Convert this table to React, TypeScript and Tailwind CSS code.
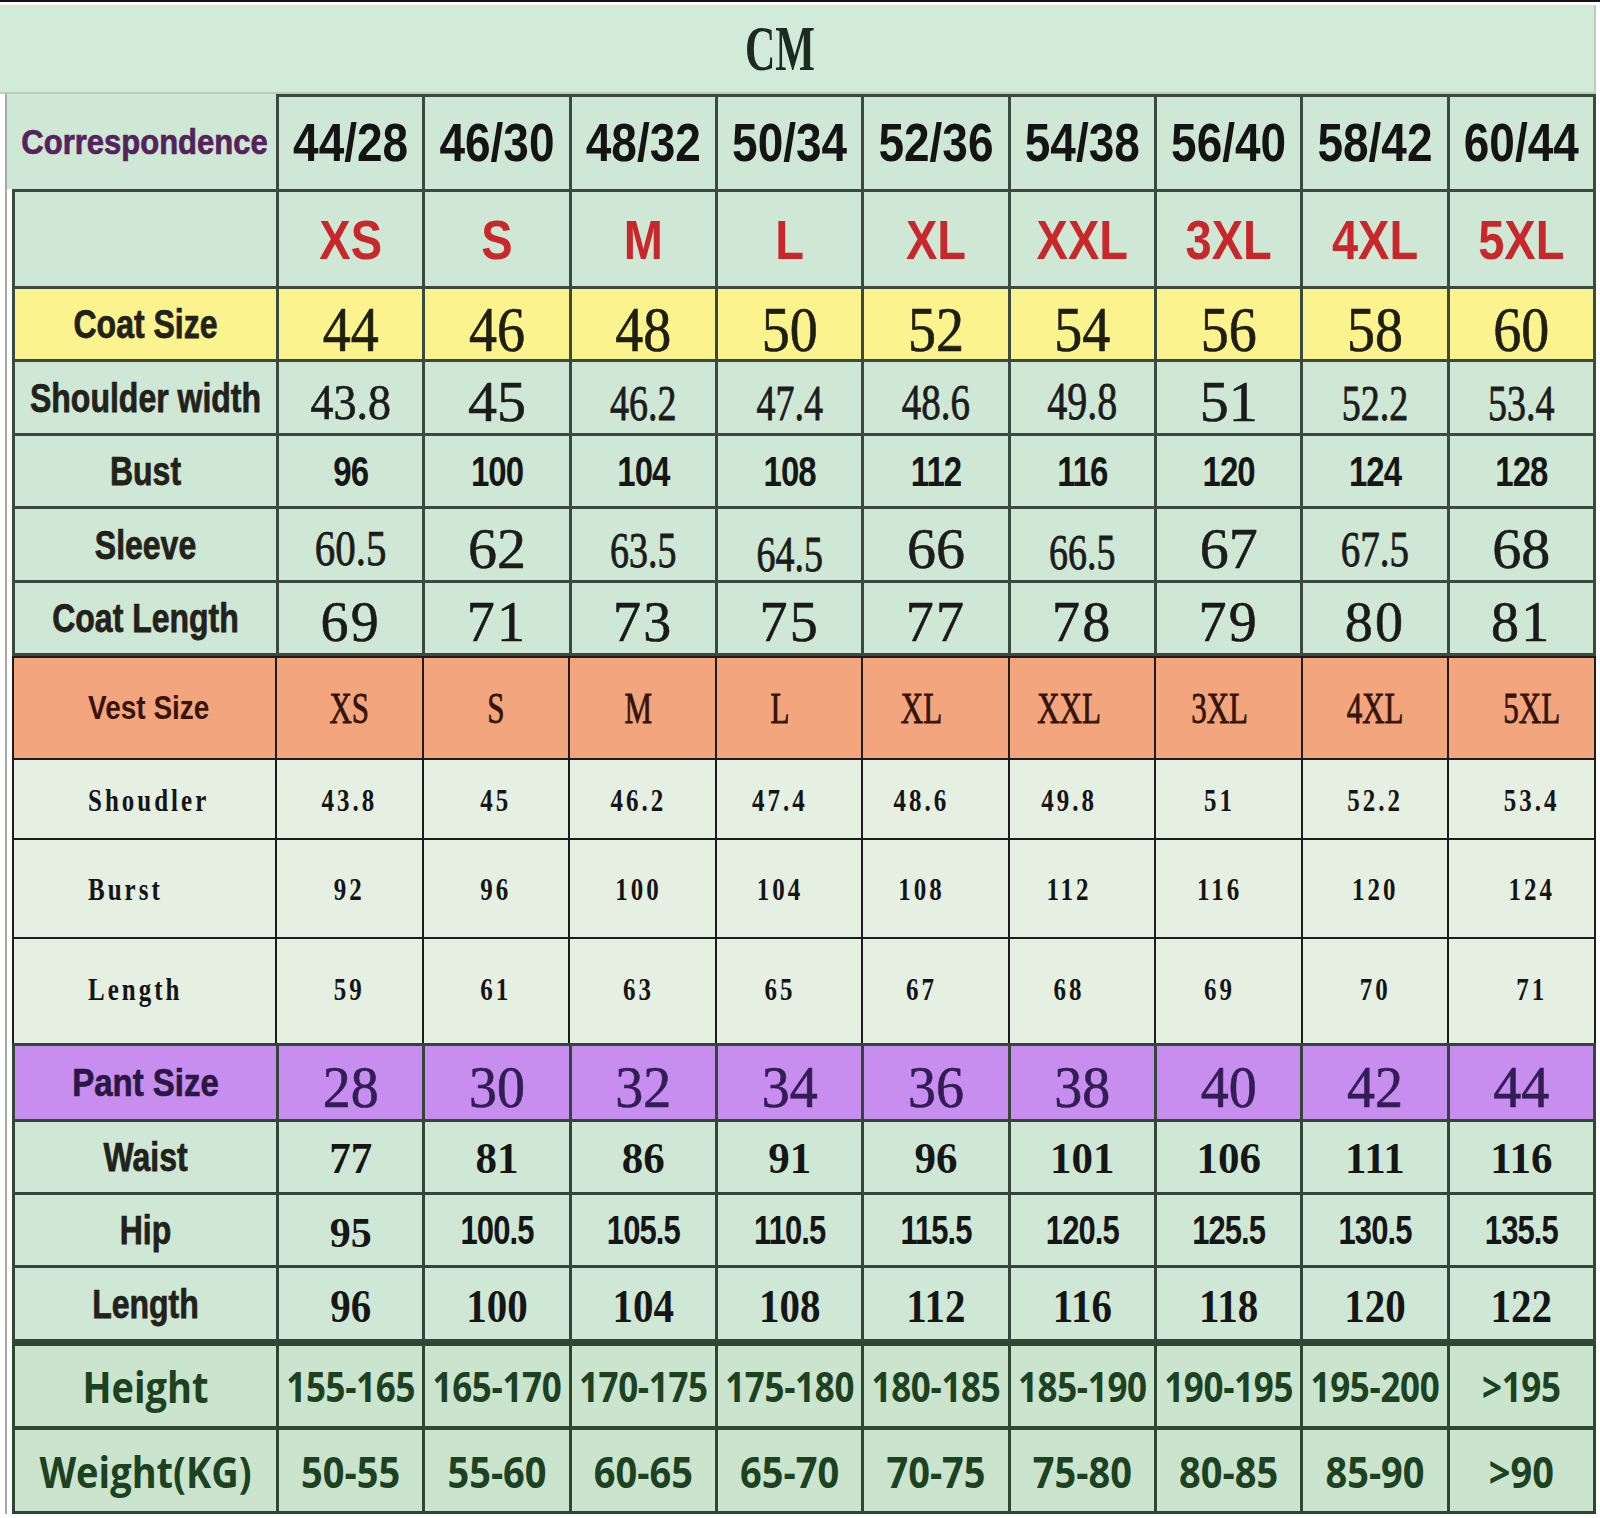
import React from 'react';

const sans = "font-['Liberation_Sans',Arial,sans-serif]";
const serif = "font-['Liberation_Serif','Times_New_Roman',serif]";
const open = "font-['Open_Sans','Liberation_Sans',sans-serif]";
const grid = 'grid grid-cols-[261px_repeat(9,minmax(0,1fr))]';
const stroke = '[-webkit-text-stroke:0.6px_currentColor]';

type Cell = [string, string?];

const Txt = ({ children, className }: { children: React.ReactNode; className: string }) => (
  <span className={`inline-block leading-none whitespace-nowrap ${className}`}>{children}</span>
);

const Row = ({
  label,
  labelCls,
  labelBox = 'justify-center',
  cells,
  cellCls,
  bg,
}: {
  label: string;
  labelCls: string;
  labelBox?: string;
  cells: Cell[];
  cellCls: string;
  bg: string;
}) => (
  <>
    <div className={`flex items-center ${labelBox} ${bg}`}>
      <Txt className={labelCls}>{label}</Txt>
    </div>
    {cells.map(([t, extra], i) => (
      <div key={i} className={`flex items-center justify-center ${bg}`}>
        <Txt className={`${cellCls} ${extra ?? ''}`}>{t}</Txt>
      </div>
    ))}
  </>
);

const plain = (arr: string[], extra = ''): Cell[] => arr.map((t) => [t, extra]);

// vest block text sits a little off the column centres
const vestShift = [
  '',
  '',
  '-translate-x-[4px]',
  '-translate-x-[9px]',
  '-translate-x-[14px]',
  '-translate-x-[13px]',
  '-translate-x-[9px]',
  '',
  'translate-x-[10px]',
];
const vest = (arr: string[]): Cell[] => arr.map((t, i) => [t, vestShift[i]]);

const green = 'bg-[#cfe8d5]';
const coatLabel = `${sans} font-bold text-[32px] scale-y-125 ${stroke} text-[#22221a]`;
const vestText = `${serif} font-bold text-[25px] scale-y-130 text-[#151515]`;

export default function App() {
  return (
    <div className="w-[1600px] h-[1518px] bg-white overflow-hidden">
      <div className="h-[2px] bg-[#151515]" />
      <div className="h-[3px]" />
      <div className="w-[1596px] h-[89px] bg-[#d2ebd9] border-b-2 border-r-2 border-[#b5cfbb] flex items-center justify-center">
        <Txt className={`${serif} font-bold text-[42px] scale-y-150 -translate-x-[17px] text-[#1b2b20]`}>CM</Txt>
      </div>

      <div className="ml-[5px] w-[1591px] border-l-2 border-[#a3aba5] pl-[5px]">
        {/* coat */}
        <div className={`${grid} grid-rows-[92px_94px_70px_71px_70px_71px_70px] gap-[3px] p-[3px] bg-[#3a4a3f]`}>
          <div className={`-mt-[3px] -ml-[8px] flex items-center justify-center ${green}`}>
            <Txt className={`${sans} font-bold text-[31px] scale-y-115 ml-[6px] ${stroke} text-[#55235c]`}>Correspondence</Txt>
          </div>
          {['44/28', '46/30', '48/32', '50/34', '52/36', '54/38', '56/40', '58/42', '60/44'].map((t) => (
            <div key={t} className={`flex items-center justify-center ${green}`}>
              <Txt className={`${sans} font-bold text-[46px] scale-y-115 text-[#141414]`}>{t}</Txt>
            </div>
          ))}

          <Row
            label=""
            labelCls=""
            bg={green}
            cells={plain(['XS', 'S', 'M', 'L', 'XL', 'XXL', '3XL', '4XL', '5XL'])}
            cellCls={`${sans} font-bold text-[47px] scale-y-120 text-[#c8282b]`}
          />
          <Row
            label="Coat Size"
            labelCls={`${coatLabel} text-[#2a2a14]`}
            bg="bg-[#fbf48e]"
            cells={plain(['44', '46', '48', '50', '52', '54', '56', '58', '60'])}
            cellCls={`${serif} text-[56px] scale-y-115 translate-y-[5px] ${stroke} text-[#1e1e12]`}
          />
          <Row
            label="Shoulder width"
            labelCls={coatLabel}
            bg={green}
            cells={[
              ['43.8', 'text-[46px] scale-y-110'],
              ['45', 'text-[58px]'],
              ['46.2', 'text-[38px] scale-y-135'],
              ['47.4', 'text-[38px] scale-y-135'],
              ['48.6', 'text-[39px] scale-y-130 translate-y-[4px]'],
              ['49.8', 'text-[40px] scale-y-130 translate-y-[4px]'],
              ['51', 'text-[58px]'],
              ['52.2', 'text-[38px] scale-y-135 translate-y-[4px]'],
              ['53.4', 'text-[38px] scale-y-135 translate-y-[2px]'],
            ]}
            cellCls={`${serif} translate-y-[4px] ${stroke} text-[#1c1c1c]`}
          />
          <Row
            label="Bust"
            labelCls={coatLabel}
            bg={green}
            cells={plain(['96', '100', '104', '108', '112', '116', '120', '124', '128'])}
            cellCls={`${sans} font-bold text-[33px] scale-y-130 tracking-[-0.03em] text-[#161616]`}
          />
          <Row
            label="Sleeve"
            labelCls={coatLabel}
            bg={green}
            cells={[
              ['60.5', 'text-[41px] scale-y-125'],
              ['62', 'text-[58px]'],
              ['63.5', 'text-[38px] scale-y-135'],
              ['64.5', 'text-[38px] scale-y-135 translate-y-[8px]'],
              ['66', 'text-[58px]'],
              ['66.5', 'text-[38px] scale-y-135 translate-y-[6px]'],
              ['67', 'text-[58px]'],
              ['67.5', 'text-[39px] scale-y-130'],
              ['68', 'text-[58px]'],
            ]}
            cellCls={`${serif} translate-y-[4px] ${stroke} text-[#1c1c1c]`}
          />
          <Row
            label="Coat Length"
            labelCls={coatLabel}
            bg={green}
            cells={plain(['69', '71', '73', '75', '77', '78', '79', '80', '81'])}
            cellCls={`${serif} text-[56px] tracking-[0.04em] translate-y-[4px] ${stroke} text-[#1a1a1a]`}
          />
        </div>

        {/* vest */}
        <div className={`${grid} grid-rows-[100px_78px_97px_104px] gap-[2px] pt-[2px] px-[2px] bg-[#1d1d1d]`}>
          <Row
            label="Vest Size"
            labelCls={`${sans} font-bold text-[28px] scale-y-120 text-[#3a130b]`}
            labelBox="justify-start pl-[74px]"
            bg="bg-[#f3a67d]"
            cells={vest(['XS', 'S', 'M', 'L', 'XL', 'XXL', '3XL', '4XL', '5XL'])}
            cellCls={`${serif} text-[31px] scale-y-140 ${stroke} text-[#35140c]`}
          />
          <Row
            label="Shoudler"
            labelCls={`${vestText} tracking-[0.12em]`}
            labelBox="justify-start pl-[74px]"
            bg="bg-[#e5efe2]"
            cells={vest(['43.8', '45', '46.2', '47.4', '48.6', '49.8', '51', '52.2', '53.4'])}
            cellCls={`${vestText} tracking-[0.12em]`}
          />
          <Row
            label="Burst"
            labelCls={`${vestText} tracking-[0.12em]`}
            labelBox="justify-start pl-[74px]"
            bg="bg-[#e5efe2]"
            cells={vest(['92', '96', '100', '104', '108', '112', '116', '120', '124'])}
            cellCls={`${vestText} tracking-[0.12em]`}
          />
          <Row
            label="Length"
            labelCls={`${vestText} tracking-[0.12em] -translate-y-[3px]`}
            labelBox="justify-start pl-[74px]"
            bg="bg-[#e5efe2]"
            cells={vest(['59', '61', '63', '65', '67', '68', '69', '70', '71'])}
            cellCls={`${vestText} tracking-[0.12em] -translate-y-[3px]`}
          />
        </div>

        {/* pants */}
        <div className={`${grid} grid-rows-[73px_70px_70px_71px] gap-[3px] p-[3px] bg-[#34453a]`}>
          <Row
            label="Pant Size"
            labelCls={`${sans} font-bold text-[33px] scale-y-120 ${stroke} text-[#2a1743]`}
            bg="bg-[#c78ef0]"
            cells={plain(['28', '30', '32', '34', '36', '38', '40', '42', '44'])}
            cellCls={`${serif} text-[56px] scale-y-105 translate-y-[4px] ${stroke} text-[#321d55]`}
          />
          <Row
            label="Waist"
            labelCls={coatLabel}
            bg={green}
            cells={plain(['77', '81', '86', '91', '96', '101', '106', '111', '116'])}
            cellCls={`${serif} font-bold text-[43px] scale-y-105 text-[#161616]`}
          />
          <Row
            label="Hip"
            labelCls={coatLabel}
            bg={green}
            cells={[
              ['95', `${serif} text-[42px] translate-y-[3px]`],
              ['100.5', `${sans} text-[31px] scale-y-130 tracking-[-0.03em]`],
              ['105.5', `${sans} text-[31px] scale-y-130 tracking-[-0.03em]`],
              ['110.5', `${sans} text-[31px] scale-y-130 tracking-[-0.03em]`],
              ['115.5', `${sans} text-[31px] scale-y-130 tracking-[-0.03em]`],
              ['120.5', `${sans} text-[31px] scale-y-130 tracking-[-0.03em]`],
              ['125.5', `${sans} text-[31px] scale-y-130 tracking-[-0.03em]`],
              ['130.5', `${sans} text-[31px] scale-y-130 tracking-[-0.03em]`],
              ['135.5', `${sans} text-[31px] scale-y-130 tracking-[-0.03em]`],
            ]}
            cellCls="font-bold text-[#161616]"
          />
          <Row
            label="Length"
            labelCls={coatLabel}
            bg={green}
            cells={plain(['96', '100', '104', '108', '112', '116', '118', '120', '122'])}
            cellCls={`${serif} font-bold text-[41px] scale-y-115 translate-y-[3px] text-[#161616]`}
          />
        </div>

        {/* height / weight */}
        <div className={`${grid} grid-rows-[80px_81px] gap-x-[3px] gap-y-[4px] pt-[4px] px-[3px] pb-[3px] bg-[#2c4830]`}>
          <Row
            label="Height"
            labelCls={`${open} font-bold text-[38px] scale-y-115 text-[#1c4221]`}
            bg="bg-[#cae4ce]"
            cells={plain(['155-165', '165-170', '170-175', '175-180', '180-185', '185-190', '190-195', '195-200', '>195'])}
            cellCls={`${open} font-bold text-[35px] scale-y-115 tracking-[-0.01em] text-[#1c4221]`}
          />
          <Row
            label="Weight(KG)"
            labelCls={`${open} font-bold text-[38px] scale-y-115 text-[#1c4221]`}
            bg="bg-[#cae4ce]"
            cells={plain(['50-55', '55-60', '60-65', '65-70', '70-75', '75-80', '80-85', '85-90', '>90'])}
            cellCls={`${open} font-bold text-[38px] scale-y-115 text-[#1c4221]`}
          />
        </div>
      </div>
    </div>
  );
}
